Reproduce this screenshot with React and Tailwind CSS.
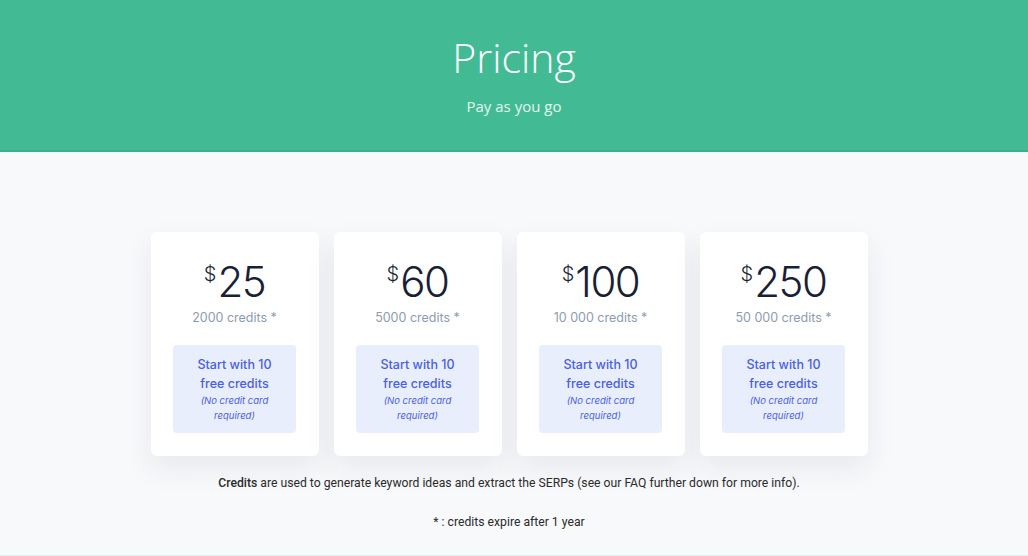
import React from 'react';

const plans = [
  { price: '25', credits: '2000 credits *' },
  { price: '60', credits: '5000 credits *' },
  { price: '100', credits: '10 000 credits *' },
  { price: '250', credits: '50 000 credits *' },
];

const PlanCard = ({ price, credits }) => (
  <div className="w-[168px] h-[224px] bg-white rounded-md shadow-[0_12px_30px_rgba(30,40,70,0.08)] flex flex-col items-center pt-[29px]">
    <div className="flex items-start text-[#1a1f36] font-['Inter',sans-serif] font-light leading-none">
      <span className="text-[20px] mt-[3px] mr-[1px]">$</span>
      <span className="text-[42px] tracking-[-1.5px]">{price}</span>
    </div>
    <div className="mt-[6px] text-[12.5px] text-[#8e9bb0] font-['Inter',sans-serif]">{credits}</div>
    <div className="mt-[17px] w-[123px] h-[88px] bg-[#e8eefc] rounded-[4px] flex flex-col items-center pt-[10px] text-[#4a5fe0] font-['Inter',sans-serif]">
      <span className="text-[12.5px] leading-[19px] font-medium text-center">Start with 10<br />free credits</span>
      <span className="text-[9.5px] leading-[15px] italic text-center">(No credit card<br />required)</span>
    </div>
  </div>
);

export default function App() {
  return (
    <div className="w-full min-h-[556px] bg-[#f8f9fb] flex flex-col border-b border-[#dff1ea]">
      {/* Header */}
      <div className="h-[152px] bg-[#42bb94] border-b-2 border-[#3cae89] flex flex-col items-center pt-[30px] text-white">
        <h1 className="text-[41px] leading-[54px] font-light font-['Open_Sans',sans-serif]">Pricing</h1>
        <p className="mt-[11px] text-[15px] text-[#e2f6ef] font-['Open_Sans',sans-serif]">Pay as you go</p>
      </div>

      {/* Plans */}
      <div className="flex justify-center gap-[15px] pt-[80px] pr-[10px]">
        {plans.map((p) => (
          <PlanCard key={p.price} {...p} />
        ))}
      </div>

      <div className="pr-[10px] flex flex-col items-center text-[12.2px] text-[#2b2b2b] font-['Roboto',sans-serif]">
        <p className="mt-[18px]"><span className="font-medium">Credits</span> are used to generate keyword ideas and extract the SERPs (see our FAQ further down for more info).</p>
        <p className="mt-[21px]">* : credits expire after 1 year</p>
      </div>
    </div>
  );
}
